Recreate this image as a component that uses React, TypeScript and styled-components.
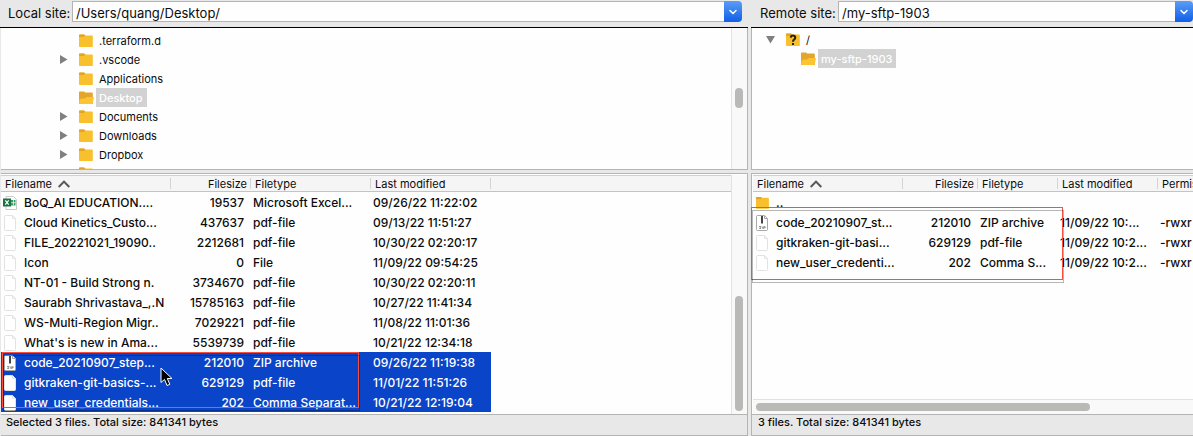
import React from "react";
import styled, { createGlobalStyle, css } from "styled-components";

const GlobalStyle = createGlobalStyle`
  * { box-sizing: border-box; }
  body {
    margin: 0;
    background: #e8e8e8;
    color: #0c0c0c;
    font-family: Inter, "Liberation Sans", sans-serif;
    font-size: 12px;
  }
`;

const Window = styled.main`
  display: grid;
  grid-template-columns: minmax(0, 748fr) minmax(0, 442fr);
  column-gap: 3px;
  height: 100vh;
  min-height: 360px;
  overflow: hidden;
`;

const Pane = styled.section`
  display: flex;
  flex-direction: column;
  min-width: 0;
  min-height: 0;
`;

const SiteBar = styled.form<{ $remote?: boolean }>`
  display: flex;
  align-items: flex-start;
  gap: 5px;
  height: 28px;
  padding: ${(p) => (p.$remote ? "1px 0 0 9px" : "1px 6px 0 8px")};
  border-bottom: 1px solid #000;
`;

const SiteLabel = styled.label<{ $width: number }>`
  flex: none;
  width: ${(p) => p.$width}px;
  font-size: 13px;
  line-height: 24px;
  white-space: nowrap;
`;

const Combo = styled.div`
  display: flex;
  flex: 1;
  min-width: 0;
  height: 21px;
`;

const PathInput = styled.input`
  flex: 1;
  min-width: 0;
  padding: 3px 3px 0;
  border: 1px solid #b4b4b4;
  border-right: 0;
  border-radius: 0;
  background: #fefefe;
  color: inherit;
  font: 13px Inter, "Liberation Sans", sans-serif;
  outline: 0;
`;

const DropButton = styled.button`
  display: grid;
  place-items: center;
  width: 18px;
  padding: 0;
  border: 0;
  border-radius: 0 4px 4px 0;
  background: linear-gradient(#5b9df8, #0f5fe8);
`;

const Framed = styled.div`
  position: relative;
  display: flex;
  min-height: 0;
  background: #fefefe;
  border: 0 solid #b4b4b4;
`;

const TreePanel = styled(Framed)<{ $remote?: boolean }>`
  flex: none;
  height: 142px;
  border-bottom-width: 1px;
  ${(p) => (p.$remote ? "border-left-width: 1px;" : "border-right-width: 1px; margin-left: 1px;")}
`;

const Tree = styled.ul<{ $remote?: boolean }>`
  flex: 1;
  min-width: 0;
  margin: 0;
  padding: ${(p) => (p.$remote ? 2 : 3)}px 0 0;
  list-style: none;
  overflow: hidden;
`;

const TreeRow = styled.li<{ $indent: number }>`
  display: flex;
  align-items: center;
  height: 19px;
  padding-left: ${(p) => p.$indent}px;
  font-size: 11px;
`;

const Twisty = styled.span`
  display: flex;
  width: 19px;
`;

const TreeName = styled.span<{ $selected?: boolean }>`
  margin-left: 2px;
  padding: 2px 4px 0 3px;
  line-height: 17px;
  ${(p) =>
    p.$selected &&
    css`
      background: #d2d2d2;
      color: #fff;
      font-weight: 500;
    `}
`;

const VTrack = styled.div<{ $top: number }>`
  flex: none;
  width: 16px;
  padding: ${(p) => p.$top}px 4px 3px 3px;
  border-left: 1px solid #e2e2e2;
  background: #f9f9f9;
`;

const Thumb = styled.div`
  border-radius: 4px;
  background: #b9b9b7;
`;

const HTrack = styled.div`
  flex: none;
  height: 15px;
  padding: 3px;
  border-top: 1px solid #e2e2e2;
  background: #f9f9f9;
`;

const ListPanel = styled(Framed)<{ $remote?: boolean }>`
  flex: 1;
  margin-top: 3px;
  padding-top: 1px;
  border-top-width: 1px;
  ${(p) =>
    p.$remote
      ? "border-left-width: 1px; padding-left: 1px;"
      : "border-right-width: 1px; margin-left: 1px;"}
`;

const ListBody = styled.div`
  display: flex;
  flex: 1;
  flex-direction: column;
  min-width: 0;
`;

const TableClip = styled.div`
  flex: 1;
  min-height: 0;
  overflow: hidden;
`;

const FileTable = styled.table`
  width: 100%;
  table-layout: fixed;
  border-collapse: separate;
  border-spacing: 0;
`;

const Head = styled.th<{ $end?: boolean }>`
  height: 17px;
  padding: 1px 4px 0;
  border-top: 1px solid #d0d0d0;
  border-bottom: 1px solid #c4c4c4;
  background: linear-gradient(#d4d4d4, #d4d4d4) right center / 1px 11px no-repeat #f5f5f5;
  font-size: 11px;
  font-weight: 400;
  line-height: 14px;
  text-align: ${(p) => (p.$end ? "right" : "left")};
  white-space: nowrap;
  overflow: hidden;
  &:last-child { background: #f5f5f5; }
`;

const HeadLabel = styled.span`
  display: flex;
  align-items: center;
  gap: 6px;
`;

const Row = styled.tr<{ $selected?: boolean }>`
  ${(p) =>
    p.$selected &&
    css`
      color: #fff;
      td:not(:last-child) { background: #0a44c8; }
    `}
`;

const Cell = styled.td<{ $end?: boolean }>`
  height: 20px;
  padding: 2px ${(p) => (p.$end ? 7 : 0)}px 0 2px;
  font-weight: 500;
  line-height: 18px;
  text-align: ${(p) => (p.$end ? "right" : "left")};
  white-space: nowrap;
  overflow: hidden;
`;

const NameBox = styled.span`
  display: flex;
  align-items: center;
  gap: 6px;
  height: 18px;
`;

const IconSlot = styled.span`
  display: flex;
  flex: none;
  justify-content: center;
  width: 15px;
`;

const Status = styled.footer<{ $remote?: boolean }>`
  flex: none;
  height: 22px;
  padding-left: ${(p) => (p.$remote ? 6 : 5)}px;
  border: 1px solid #b4b4b4;
  border-width: 1px ${(p) => (p.$remote ? "0 1px 1px" : "1px 1px 0")};
  margin-left: ${(p) => (p.$remote ? 0 : 1)}px;
  font-size: 11px;
  font-weight: 500;
  line-height: 15px;
  white-space: nowrap;
`;

const Mark = styled.div`
  position: absolute;
  border: 1px solid #f8503f;
  pointer-events: none;
  &::after {
    content: "";
    position: absolute;
    inset: 2px -2px -4px 0;
    border: 1px solid rgba(0, 0, 0, 0.28);
  }
`;

const LocalMark = styled(Mark)`
  left: 1px;
  top: 178px;
  width: 357px;
  height: 56px;
`;

const RemoteMark = styled(Mark)`
  left: -1px;
  top: 33px;
  width: 312px;
  height: 73px;
`;

const Pointer = styled.svg`
  position: absolute;
  left: 159px;
  top: 193px;
`;

const Chevron = () => (
  <svg width="10" height="8" viewBox="0 0 10 8" fill="none" stroke="#fff" strokeWidth="1.5" strokeLinecap="round" strokeLinejoin="round">
    <path d="M2 2.5 5 5.5 8 2.5" />
  </svg>
);

const SortArrow = () => (
  <svg width="12" height="8" viewBox="0 0 12 8" fill="none" stroke="#555" strokeWidth="2">
    <path d="M.7 7 6 1.6 11.3 7" />
  </svg>
);

const Folder = ({ open, unknown }: { open?: boolean; unknown?: boolean }) => (
  <svg width="16" height="14" viewBox="0 0 16 14">
    <path d="M1 1.3Q1 .5 1.8.5H6l1.3 1H14q.8 0 .8.8V13H1.8Q1 13 1 12.2Z" fill={open ? "#e3a52a" : "#f8c02c"} />
    {!open && <path d="M1 1.3Q1 .5 1.8.5H6l1.3 1L6 3H1Z" fill="#e0a526" />}
    {open && <path d="M1.2 12.8V9.500L3 7.500H7l1.400-1.500H16l-1.200 6.200q-.2.8-1 .8H1.8Z" fill="#fcc430" />}
    {unknown && (
      <g fill="none" stroke="#2a2008" strokeWidth="2">
        <path d="M5.8 4.7Q6 2.6 8 2.6t2.3 2Q10.300 6 8.800 6.900 8 7.400 8 8.800" />
        <path d="M8 9.900V12" />
      </g>
    )}
  </svg>
);

const Triangle = ({ down }: { down?: boolean }) => (
  <svg width="9" height="9" viewBox="0 0 9 9" fill="#808080">
    <path d={down ? "M0 1H9L4.500 8.500Z" : "M1 0V9L8.500 4.500Z"} />
  </svg>
);

type Kind = "page" | "zip" | "excel" | "folder";

const FileIcon = ({ kind }: { kind: Kind }) => {
  if (kind === "folder") return <Folder />;
  if (kind === "excel")
    return (
      <svg width="15" height="16" viewBox="0 0 15 16">
        <path d="M3 1.500H10.500L13.500 4.500V14.500H3Z" fill="#fff" stroke="#c9c9c9" />
        <path d="M8 5H12.500V10.500H8Z" fill="#2f9a62" />
        <path d="M8 7.700H12.500M10.500 5V10.500" stroke="#fff" strokeWidth=".7" />
        <path d="M0 3.500H8V11.500H0Z" fill="#1d7244" />
        <path d="M2.300 5.300 5.700 9.700M5.700 5.300 2.300 9.700" stroke="#fff" strokeWidth="1.200" />
      </svg>
    );
  return (
    <svg width="13" height="16" viewBox="0 0 13 16">
      <path
        d="M1.500.5H8.500L11.500 3.500V14.500Q11.500 15.500 10.500 15.500H1.500Q.5 15.500.5 14.500V1.500Q.5.5 1.500.5Z"
        fill="#fff"
        stroke={kind === "zip" ? "#a8a8a8" : "#e2e2e2"}
      />
      <path d="M8.500.5V3.500H11.500" fill="none" stroke={kind === "zip" ? "#a8a8a8" : "#e2e2e2"} />
      {kind === "zip" && (
        <>
          <path d="M6 1V8.500" stroke="#444" strokeWidth="2" />
          <path d="M3 11.500H5L3.500 13.500H5M6.300 11.500V13.700M7.700 14V11.700H9.200V12.800H7.700" stroke="#777" strokeWidth=".8" fill="none" />
        </>
      )}
    </svg>
  );
};

interface FileEntry {
  kind: Kind;
  name: string;
  size: string;
  type: string;
  modified: string;
  last?: string;
  selected?: boolean;
}

const localFiles: FileEntry[] = [
  { kind: "excel", name: "BoQ_AI EDUCATION....", size: "19537", type: "Microsoft Excel...", modified: "09/26/22 11:22:02" },
  { kind: "page", name: "Cloud Kinetics_Custo...", size: "437637", type: "pdf-file", modified: "09/13/22 11:51:27" },
  { kind: "page", name: "FILE_20221021_19090..", size: "2212681", type: "pdf-file", modified: "10/30/22 02:20:17" },
  { kind: "page", name: "Icon", size: "0", type: "File", modified: "11/09/22 09:54:25" },
  { kind: "page", name: "NT-01 - Build Strong n.", size: "3734670", type: "pdf-file", modified: "10/30/22 02:20:11" },
  { kind: "page", name: "Saurabh Shrivastava_,.N", size: "15785163", type: "pdf-file", modified: "10/27/22 11:41:34" },
  { kind: "page", name: "WS-Multi-Region Migr..", size: "7029221", type: "pdf-file", modified: "11/08/22 11:01:36" },
  { kind: "page", name: "What's is new in Ama...", size: "5539739", type: "pdf-file", modified: "10/21/22 12:34:18" },
  { kind: "zip", name: "code_20210907_step...", size: "212010", type: "ZIP archive", modified: "09/26/22 11:19:38", selected: true },
  { kind: "page", name: "gitkraken-git-basics-...", size: "629129", type: "pdf-file", modified: "11/01/22 11:51:26", selected: true },
  { kind: "page", name: "new_user_credentials...", size: "202", type: "Comma Separat...", modified: "10/21/22 12:19:04", selected: true },
];

const remoteFiles: FileEntry[] = [
  { kind: "folder", name: "..", size: "", type: "", modified: "" },
  { kind: "zip", name: "code_20210907_st...", size: "212010", type: "ZIP archive", modified: "11/09/22 10:...", last: "-rwxr" },
  { kind: "page", name: "gitkraken-git-basi...", size: "629129", type: "pdf-file", modified: "11/09/22 10:2...", last: "-rwxr" },
  { kind: "page", name: "new_user_credenti...", size: "202", type: "Comma S...", modified: "11/09/22 10:2...", last: "-rwxr" },
];

const Files = ({ files, widths, lastHead }: { files: FileEntry[]; widths: number[]; lastHead?: string }) => (
  <FileTable>
    <colgroup>
      {widths.map((w, i) => (
        <col key={i} style={{ width: w }} />
      ))}
      <col />
    </colgroup>
    <thead>
      <tr>
        <Head>
          <HeadLabel>
            Filename <SortArrow />
          </HeadLabel>
        </Head>
        <Head $end>Filesize</Head>
        <Head>Filetype</Head>
        <Head>Last modified</Head>
        <Head>{lastHead}</Head>
      </tr>
    </thead>
    <tbody>
      {files.map((f) => (
        <Row key={f.name} $selected={f.selected}>
          <Cell>
            <NameBox>
              <IconSlot>
                <FileIcon kind={f.kind} />
              </IconSlot>
              {f.name}
            </NameBox>
          </Cell>
          <Cell $end>{f.size}</Cell>
          <Cell>{f.type}</Cell>
          <Cell>{f.modified}</Cell>
          <Cell>{f.last}</Cell>
        </Row>
      ))}
    </tbody>
  </FileTable>
);

const localTree = [
  { name: ".terraform.d" },
  { name: ".vscode", expandable: true },
  { name: "Applications" },
  { name: "Desktop", selected: true },
  { name: "Documents", expandable: true },
  { name: "Downloads", expandable: true },
  { name: "Dropbox", expandable: true },
  { name: "" },
];

interface SitePickerProps {
  id: string;
  label: string;
  path: string;
  labelWidth: number;
  remote?: boolean;
}

const SitePicker = ({ id, label, path, labelWidth, remote }: SitePickerProps) => (
  <SiteBar $remote={remote}>
    <SiteLabel htmlFor={id} $width={labelWidth}>
      {label}
    </SiteLabel>
    <Combo>
      <PathInput id={id} defaultValue={path} spellCheck={false} />
      <DropButton type="button" aria-label="Show recent paths">
        <Chevron />
      </DropButton>
    </Combo>
  </SiteBar>
);

export default function App() {
  return (
    <>
      <GlobalStyle />
      <Window>
        <Pane>
          <SitePicker id="local" label="Local site:" path="/Users/quang/Desktop/" labelWidth={59} />
          <TreePanel>
            <Tree>
              {localTree.map((n) => (
                <TreeRow key={n.name} $indent={58}>
                  <Twisty>{n.expandable && <Triangle />}</Twisty>
                  <Folder open={n.selected} />
                  <TreeName $selected={n.selected}>{n.name}</TreeName>
                </TreeRow>
              ))}
            </Tree>
            <VTrack $top={60}>
              <Thumb style={{ height: 20 }} />
            </VTrack>
          </TreePanel>
          <ListPanel>
            <ListBody>
              <TableClip>
                <Files files={localFiles} widths={[170, 80, 120, 120]} />
              </TableClip>
            </ListBody>
            <VTrack $top={121}>
              <Thumb style={{ height: "100%" }} />
            </VTrack>
            <LocalMark />
            <Pointer width="13" height="20" viewBox="0 0 13 20">
              <path d="M1 1V15.500L4.500 12.400 7 18.500 9.800 17.300 7.300 11.500H12Z" fill="#000" stroke="#fff" strokeWidth="1" />
            </Pointer>
          </ListPanel>
          <Status>Selected 3 files. Total size: 841341 bytes</Status>
        </Pane>
        <Pane>
          <SitePicker id="remote" label="Remote site:" path="/my-sftp-1903" labelWidth={73} remote />
          <TreePanel $remote>
            <Tree $remote>
              <TreeRow $indent={14}>
                <Twisty>
                  <Triangle down />
                </Twisty>
                <Folder unknown />
                <TreeName>/</TreeName>
              </TreeRow>
              <TreeRow $indent={48}>
                <Folder open />
                <TreeName $selected>my-sftp-1903</TreeName>
              </TreeRow>
            </Tree>
          </TreePanel>
          <ListPanel $remote>
            <ListBody>
              <TableClip>
                <Files files={remoteFiles} widths={[150, 75, 80, 100]} lastHead="Permis" />
              </TableClip>
              <HTrack>
                <Thumb style={{ height: 8, width: "77%" }} />
              </HTrack>
            </ListBody>
            <RemoteMark />
          </ListPanel>
          <Status $remote>3 files. Total size: 841341 bytes</Status>
        </Pane>
      </Window>
    </>
  );
}
